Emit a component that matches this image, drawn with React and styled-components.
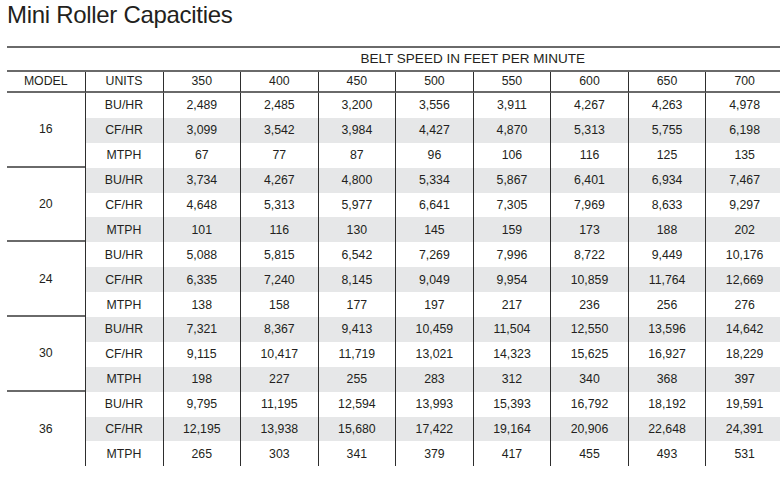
import React from 'react';
import styled, { createGlobalStyle } from 'styled-components';

const GlobalStyle = createGlobalStyle`
  html, body {
    margin: 0;
    padding: 0;
    background: #ffffff;
    overflow: hidden;
  }
`;

const Page = styled.div`
  width: 780px;
  height: 479px;
  overflow: hidden;
  padding-left: 7px;
  box-sizing: border-box;
  font-family: 'Liberation Sans', Arial, sans-serif;
  color: #231f20;
`;

const Title = styled.h1`
  margin: 0 0 19px 0;
  padding-top: 3px;
  font-size: 24px;
  line-height: 24px;
  font-weight: 400;
  letter-spacing: -0.3px;
  color: #231f20;
`;

const Table = styled.table`
  width: 776px;
  table-layout: fixed;
  border-collapse: separate;
  border-spacing: 0;
  border-top: 2px solid #6a6a6a;
`;

const BeltCell = styled.th`
  height: 22px;
  padding: 0;
  border-bottom: 2px solid #6a6a6a;
  font-size: 13.5px;
  font-weight: 400;
  text-align: center;
  line-height: 22px;
`;

const HeadCell = styled.th`
  height: 19px;
  padding: 0;
  border-bottom: 2px solid #6a6a6a;
  border-left: ${p => (p.$first ? 'none' : '1px solid #2e2e2e')};
  font-size: 12.3px;
  font-weight: 400;
  text-align: center;
  line-height: 19px;
`;

const ModelCell = styled.td`
  padding: 0;
  text-align: center;
  vertical-align: middle;
  font-size: 12.3px;
  background: #ffffff;
  border-bottom: ${p => (p.$last ? 'none' : '2px solid #6a6a6a')};
`;

const Cell = styled.td`
  height: 24.9px;
  padding: 0;
  text-align: center;
  font-size: 12.3px;
  line-height: 24px;
  border-left: 1px solid #2e2e2e;
  background: ${p => (p.$shade ? '#e6e7e8' : '#ffffff')};
`;

const speeds = ['350', '400', '450', '500', '550', '600', '650', '700'];

const data = [
  {
    model: '16',
    rows: [
      ['BU/HR', '2,489', '2,485', '3,200', '3,556', '3,911', '4,267', '4,263', '4,978'],
      ['CF/HR', '3,099', '3,542', '3,984', '4,427', '4,870', '5,313', '5,755', '6,198'],
      ['MTPH', '67', '77', '87', '96', '106', '116', '125', '135'],
    ],
  },
  {
    model: '20',
    rows: [
      ['BU/HR', '3,734', '4,267', '4,800', '5,334', '5,867', '6,401', '6,934', '7,467'],
      ['CF/HR', '4,648', '5,313', '5,977', '6,641', '7,305', '7,969', '8,633', '9,297'],
      ['MTPH', '101', '116', '130', '145', '159', '173', '188', '202'],
    ],
  },
  {
    model: '24',
    rows: [
      ['BU/HR', '5,088', '5,815', '6,542', '7,269', '7,996', '8,722', '9,449', '10,176'],
      ['CF/HR', '6,335', '7,240', '8,145', '9,049', '9,954', '10,859', '11,764', '12,669'],
      ['MTPH', '138', '158', '177', '197', '217', '236', '256', '276'],
    ],
  },
  {
    model: '30',
    rows: [
      ['BU/HR', '7,321', '8,367', '9,413', '10,459', '11,504', '12,550', '13,596', '14,642'],
      ['CF/HR', '9,115', '10,417', '11,719', '13,021', '14,323', '15,625', '16,927', '18,229'],
      ['MTPH', '198', '227', '255', '283', '312', '340', '368', '397'],
    ],
  },
  {
    model: '36',
    rows: [
      ['BU/HR', '9,795', '11,195', '12,594', '13,993', '15,393', '16,792', '18,192', '19,591'],
      ['CF/HR', '12,195', '13,938', '15,680', '17,422', '19,164', '20,906', '22,648', '24,391'],
      ['MTPH', '265', '303', '341', '379', '417', '455', '493', '531'],
    ],
  },
];

export default function App() {
  return (
    <Page>
      <GlobalStyle />
      <Title>Mini Roller Capacities</Title>
      <Table>
        <colgroup>
          <col style={{ width: '77.5px' }} />
          <col style={{ width: '78px' }} />
          {speeds.map(s => (
            <col key={s} style={{ width: '77.56px' }} />
          ))}
        </colgroup>
        <thead>
          <tr>
            <BeltCell />
            <BeltCell />
            <BeltCell colSpan={8}>BELT SPEED IN FEET PER MINUTE</BeltCell>
          </tr>
          <tr>
            <HeadCell $first>MODEL</HeadCell>
            <HeadCell>UNITS</HeadCell>
            {speeds.map(s => (
              <HeadCell key={s}>{s}</HeadCell>
            ))}
          </tr>
        </thead>
        <tbody>
          {data.map((group, g) =>
            group.rows.map((row, r) => {
              const shade = (g * 3 + r) % 2 === 1;
              return (
                <tr key={group.model + row[0]}>
                  {r === 0 && (
                    <ModelCell rowSpan={3} $last={g === data.length - 1}>
                      {group.model}
                    </ModelCell>
                  )}
                  {row.map((v, i) => (
                    <Cell key={i} $shade={shade}>
                      {v}
                    </Cell>
                  ))}
                </tr>
              );
            })
          )}
        </tbody>
      </Table>
    </Page>
  );
}
